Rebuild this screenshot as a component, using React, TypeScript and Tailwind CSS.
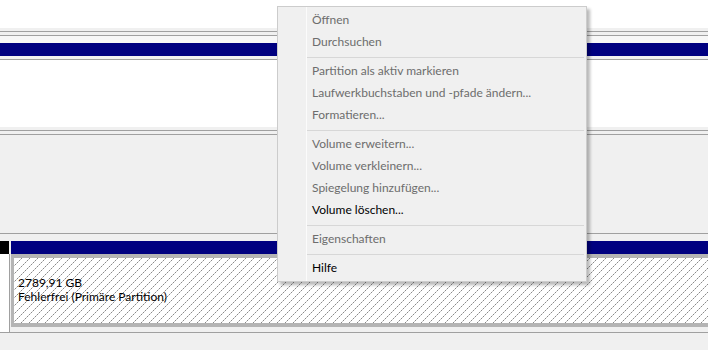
import React from 'react';

type Entry = { label: string; enabled?: boolean } | 'sep';

const menuEntries: Entry[] = [
  { label: 'Öffnen' },
  { label: 'Durchsuchen' },
  'sep',
  { label: 'Partition als aktiv markieren' },
  { label: 'Laufwerkbuchstaben und -pfade ändern...' },
  { label: 'Formatieren...' },
  'sep',
  { label: 'Volume erweitern...' },
  { label: 'Volume verkleinern...' },
  { label: 'Spiegelung hinzufügen...' },
  { label: 'Volume löschen...', enabled: true },
  'sep',
  { label: 'Eigenschaften' },
  'sep',
  { label: 'Hilfe', enabled: true },
];

function Hatch() {
  return (
    <svg className="absolute inset-0 h-full w-full" aria-hidden>
      <defs>
        <pattern id="hatch" width="8" height="8" patternUnits="userSpaceOnUse">
          <rect x="7" y="0" width="1" height="1" fill="#8a8a8a" />
          <rect x="6" y="1" width="1" height="1" fill="#c8c8c8" />
          <rect x="5" y="2" width="1" height="1" fill="#8a8a8a" />
          <rect x="4" y="3" width="1" height="1" fill="#c8c8c8" />
          <rect x="3" y="4" width="1" height="1" fill="#8a8a8a" />
          <rect x="2" y="5" width="1" height="1" fill="#c8c8c8" />
          <rect x="1" y="6" width="1" height="1" fill="#8a8a8a" />
          <rect x="0" y="7" width="1" height="1" fill="#c8c8c8" />
        </pattern>
      </defs>
      <rect width="100%" height="100%" fill="white" />
      <rect width="100%" height="100%" fill="url(#hatch)" />
    </svg>
  );
}

function ContextMenu() {
  return (
    <div className="absolute left-[277px] top-[6px] w-[310px] border border-[#cccccc] bg-[#f0f0f0] pt-[2px] pb-[2px] shadow-[3px_3px_3px_rgba(0,0,0,0.28)]">
      <div className="absolute bottom-0 left-[28px] top-0 w-px bg-[#fbfbfb]" />
      {menuEntries.map((entry, i) =>
        entry === 'sep' ? (
          <div key={i} className="h-[7px] pt-[4px] pl-[29px] pr-[2px]">
            <div className="h-px bg-[#d7d7d7]" />
          </div>
        ) : (
          <div
            key={i}
            className={`relative h-[22px] pl-[34px] text-[12px] leading-[22px] ${entry.enabled ? 'text-black' : 'text-[#6d6d6d]'}`}
          >
            {entry.label}
          </div>
        )
      )}
    </div>
  );
}

export default function App() {
  return (
    <div className="relative h-[350px] w-[708px] overflow-hidden bg-white font-['Lato',sans-serif]">
      <div className="flex flex-col">
        {/* top white strip */}
        <div className="h-[28px] bg-white" />

        {/* upper disk header band */}
        <div className="flex flex-col bg-[#f0f0f0]">
          <div className="h-[3px]" />
          <div className="h-px bg-[#a0a0a0]" />
          <div className="h-[3px]" />
          <div className="h-px bg-[#a0a0a0]" />
          <div className="h-[7px] bg-[#f7f7f7]" />
          <div className="h-[13px] bg-[#000080]" />
          <div className="h-[3px]" />
          <div className="h-px bg-[#a0a0a0]" />
        </div>

        {/* white list area */}
        <div className="h-[67px] bg-white" />

        {/* lower panel */}
        <div className="flex flex-col bg-[#f0f0f0]">
          <div className="h-[3px]" />
          <div className="h-px bg-[#a0a0a0]" />
          <div className="h-[3px]" />
          <div className="h-px bg-[#a0a0a0]" />
          <div className="h-[98px]" />
          <div className="h-px bg-[#a0a0a0]" />
          <div className="h-[7px]" />

          {/* disk row */}
          <div className="flex">
            <div className="flex w-[10px] flex-col">
              <div className="h-[13px] w-[9px] bg-black" />
              <div className="h-[78px] w-[10px] border-r border-[#a0a0a0] bg-white" />
            </div>
            <div className="ml-[1px] flex flex-1 flex-col">
              <div className="h-[13px] bg-[#000080]" />
              <div className="flex h-[73px] flex-col bg-[#b4b4b4] pt-[4px] pb-[4px] pl-[3px]">
                <div className="relative flex-1">
                  <Hatch />
                  <div className="relative pl-[4px] pt-[18px] text-[12px] leading-[14px] text-black">
                    <div>2789,91 GB</div>
                    <div>Fehlerfrei (Primäre Partition)</div>
                  </div>
                </div>
              </div>
            </div>
          </div>

          <div className="h-px bg-[#a0a0a0]" />
          <div className="h-[18px]" />
        </div>
      </div>

      <ContextMenu />
    </div>
  );
}
